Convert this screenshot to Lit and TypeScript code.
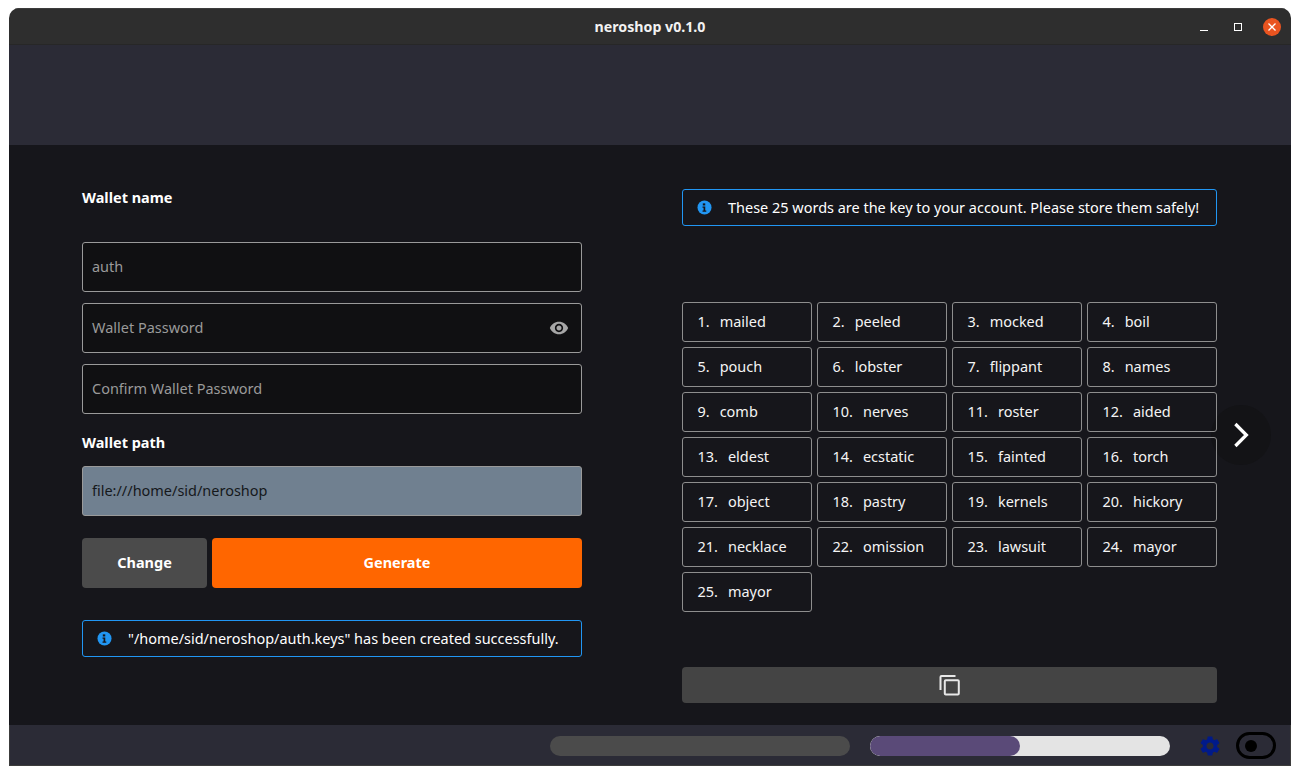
import { LitElement, html, css, svg } from 'lit';
import { customElement } from 'lit/decorators.js';

const WORDS = [
  'mailed', 'peeled', 'mocked', 'boil', 'pouch', 'lobster', 'flippant', 'names',
  'comb', 'nerves', 'roster', 'aided', 'eldest', 'ecstatic', 'fainted', 'torch',
  'object', 'pastry', 'kernels', 'hickory', 'necklace', 'omission', 'lawsuit', 'mayor',
  'mayor',
];

const infoIcon = html`<svg class="info-icon" viewBox="0 0 16 16">
  <circle cx="8" cy="8" r="7.5" fill="#2196f3"></circle>
  <rect x="6.2" y="3.6" width="2.6" height="2.2" fill="#16161b"></rect>
  <path d="M5.9 6.9h2.9v4.2h1.1v1.3H5.9v-1.3h1.1V8.2H5.9z" fill="#16161b"></path>
</svg>`;

const gearPath = svg`<path d="M19.14 12.94c.04-.3.06-.61.06-.94 0-.32-.02-.64-.07-.94l2.03-1.58c.18-.14.23-.41.12-.61l-1.92-3.32c-.12-.22-.37-.29-.59-.22l-2.39.96c-.5-.38-1.03-.7-1.62-.94l-.36-2.54c-.04-.24-.24-.41-.48-.41h-3.84c-.24 0-.43.17-.47.41l-.36 2.54c-.59.24-1.13.57-1.62.94l-2.39-.96c-.22-.08-.47 0-.59.22L2.74 8.87c-.12.21-.08.47.12.61l2.03 1.58c-.05.3-.09.63-.09.94s.02.64.07.94l-2.03 1.58c-.18.14-.23.41-.12.61l1.92 3.32c.12.22.37.29.59.22l2.39-.96c.5.38 1.03.7 1.62.94l.36 2.54c.05.24.24.41.48.41h3.84c.24 0 .44-.17.47-.41l.36-2.54c.59-.24 1.13-.56 1.62-.94l2.39.96c.22.08.47 0 .59-.22l1.92-3.32c.12-.22.07-.47-.12-.61l-2.01-1.58zM12 15.6c-1.98 0-3.6-1.62-3.6-3.6s1.62-3.6 3.6-3.6 3.6 1.62 3.6 3.6-1.62 3.6-3.6 3.6z"></path>`;

@customElement('app-root')
export class AppRoot extends LitElement {
  static styles = css`
    :host {
      display: block;
      height: 775px;
      background: #fff;
      padding: 8px 9px 9px;
      box-sizing: border-box;
      font-family: 'Noto Sans', 'Open Sans', sans-serif;
      font-size: 14.47px;
      color: #fff;
    }

    .window {
      height: 758px;
      display: flex;
      flex-direction: column;
      border-radius: 10px 10px 0 0;
      overflow: hidden;
      position: relative;
    }

    .titlebar {
      height: 37px;
      flex: none;
      box-sizing: border-box;
      background: #2e2e2e;
      border-top: 1px solid #3c3c3c;
      border-bottom: 1px solid #272727;
      display: flex;
      align-items: center;
      justify-content: center;
      position: relative;
      font-weight: 700;
      font-size: 14.2px;
      color: #f2f2f2;
    }

    .controls {
      position: absolute;
      right: 10px;
      top: 9px;
      display: flex;
      align-items: center;
    }

    .minimize {
      width: 8px;
      height: 1px;
      background: #fff;
      margin-top: 6px;
      margin-right: 26px;
    }

    .maximize {
      width: 6px;
      height: 6px;
      border: 1px solid #fff;
      margin-right: 21px;
    }

    .close {
      width: 18px;
      height: 18px;
      display: block;
    }

    .banner {
      height: 100px;
      flex: none;
      background: #2b2b36;
    }

    .content {
      flex: 1;
      background: #16161b;
      display: flex;
      padding: 44px 73px 22px;
      position: relative;
      min-height: 0;
    }

    .left {
      width: 500px;
      flex: none;
      display: flex;
      flex-direction: column;
      margin-right: 100px;
    }

    .label {
      font-weight: 700;
      line-height: 18px;
    }

    .label.name {
      margin: 0 0 35px;
    }

    .label.path {
      margin: 9px 0 14px;
    }

    .input {
      height: 50px;
      flex: none;
      box-sizing: border-box;
      border: 1px solid #9a9a9a;
      border-radius: 3px;
      background: #101012;
      color: #9a9a9a;
      display: flex;
      align-items: center;
      justify-content: space-between;
      padding: 0 12px 1px 9px;
      margin-bottom: 11px;
    }

    .input.path {
      background: #708090;
      color: #15181b;
      margin-bottom: 22px;
    }

    .eye {
      width: 20px;
      height: 20px;
      fill: #a6a6a6;
      margin: 1px 0 0 0;
    }

    .buttons {
      display: flex;
      gap: 5px;
      margin-bottom: 32px;
    }

    .btn {
      height: 50px;
      border-radius: 4px;
      display: flex;
      align-items: center;
      justify-content: center;
      font-weight: 700;
      padding-bottom: 1px;
      box-sizing: border-box;
    }

    .btn.change {
      width: 125px;
      background: #4b4b4b;
    }

    .btn.generate {
      flex: 1;
      background: #ff6600;
    }

    .alert {
      height: 37px;
      box-sizing: border-box;
      border: 1px solid #2196f3;
      border-radius: 3px;
      display: flex;
      align-items: center;
      padding-left: 14px;
      gap: 16px;
      white-space: nowrap;
    }

    .alert span {
      padding-bottom: 1px;
    }

    .info-icon {
      width: 15px;
      height: 15px;
      flex: none;
    }

    .right {
      width: 535px;
      flex: none;
      display: flex;
      flex-direction: column;
      position: relative;
      z-index: 1;
    }

    .words {
      display: grid;
      grid-template-columns: repeat(4, 130px);
      grid-auto-rows: 40px;
      gap: 5px;
      margin-top: 76px;
    }

    .word {
      box-sizing: border-box;
      border: 1px solid #8e8e8e;
      border-radius: 3px;
      display: flex;
      align-items: center;
      padding: 0 0 2px 14.5px;
      gap: 10px;
      color: #f4f4f4;
    }

    .copy {
      margin-top: auto;
      height: 36px;
      background: #444;
      border-radius: 4px;
      display: flex;
      align-items: center;
      justify-content: center;
    }

    .copy svg {
      width: 24px;
      height: 24px;
      fill: none;
      stroke: #e8e8e8;
      stroke-width: 2;
    }

    .next {
      position: absolute;
      left: 1202px;
      top: 260px;
      width: 60px;
      height: 60px;
      border-radius: 50%;
      background: #131316;
      display: flex;
      align-items: center;
      justify-content: center;
    }

    .next svg {
      width: 30px;
      height: 30px;
      fill: none;
      stroke: #fff;
      stroke-width: 2.6;
    }

    .footer {
      height: 41px;
      flex: none;
      box-sizing: border-box;
      background: #2b2b36;
      box-shadow: inset 1px -1px 0 #3c3c3c, inset -1px 0 0 #3c3c3c;
      display: flex;
      align-items: center;
      justify-content: flex-end;
      padding-right: 15px;
    }

    .bar {
      width: 300px;
      height: 20px;
      border-radius: 10px;
      overflow: hidden;
      margin-right: 20px;
    }

    .bar.dark {
      background: #4b4b4b;
    }

    .bar.light {
      background: #e4e4e4;
      margin-right: 28px;
    }

    .fill {
      height: 100%;
      background: #5a4a78;
      border-radius: 10px;
    }

    .gear {
      width: 24px;
      height: 24px;
      fill: #001a8a;
      margin-right: 14px;
    }

    .toggle {
      width: 40px;
      height: 27px;
      box-sizing: border-box;
      border: 3px solid #000;
      border-radius: 14px;
      display: flex;
      align-items: center;
      padding-left: 6px;
    }

    .knob {
      width: 12px;
      height: 12px;
      border-radius: 50%;
      background: #000;
    }
  `;

  render() {
    return html`
      <div class="window">
        <div class="titlebar">
          neroshop v0.1.0
          <div class="controls">
            <div class="minimize"></div>
            <div class="maximize"></div>
            <svg class="close" viewBox="0 0 18 18">
              <circle cx="9" cy="9" r="9" fill="#e95420"></circle>
              <path d="M5.5 5.5l7 7M12.5 5.5l-7 7" stroke="#fff" stroke-width="1.3"></path>
            </svg>
          </div>
        </div>
        <div class="banner"></div>
        <div class="content">
          <div class="left">
            <div class="label name">Wallet name</div>
            <div class="input">auth</div>
            <div class="input">
              Wallet Password
              <svg class="eye" viewBox="0 0 24 24">
                <path d="M12 4.500C7 4.500 2.730 7.610 1 12c1.730 4.390 6 7.500 11 7.500s9.270-3.110 11-7.500c-1.730-4.390-6-7.500-11-7.500zM12 17c-2.760 0-5-2.240-5-5s2.240-5 5-5 5 2.240 5 5-2.240 5-5 5zm0-8c-1.660 0-3 1.340-3 3s1.340 3 3 3 3-1.340 3-3-1.340-3-3-3z"></path>
              </svg>
            </div>
            <div class="input">Confirm Wallet Password</div>
            <div class="label path">Wallet path</div>
            <div class="input path">file:///home/sid/neroshop</div>
            <div class="buttons">
              <div class="btn change">Change</div>
              <div class="btn generate">Generate</div>
            </div>
            <div class="alert">${infoIcon}<span>"/home/sid/neroshop/auth.keys" has been created successfully.</span></div>
          </div>
          <div class="right">
            <div class="alert">${infoIcon}<span>These 25 words are the key to your account. Please store them safely!</span></div>
            <div class="words">
              ${WORDS.map((w, i) => html`<div class="word"><span>${i + 1}.</span><span>${w}</span></div>`)}
            </div>
            <div class="copy">
              <svg viewBox="0 0 24 24">
                <path d="M2.500 17V4a1 1 0 0 1 1-1H17.500"></path>
                <rect x="6.800" y="7.300" width="14" height="14.300" rx="1"></rect>
              </svg>
            </div>
          </div>
          <div class="next">
            <svg viewBox="0 0 24 24"><path d="M7.500 3.200l8.800 8.800-8.800 8.800"></path></svg>
          </div>
        </div>
        <div class="footer">
          <div class="bar dark"></div>
          <div class="bar light"><div class="fill" style="width: 50%"></div></div>
          <svg class="gear" viewBox="0 0 24 24">${gearPath}</svg>
          <div class="toggle"><div class="knob"></div></div>
        </div>
      </div>
    `;
  }
}
